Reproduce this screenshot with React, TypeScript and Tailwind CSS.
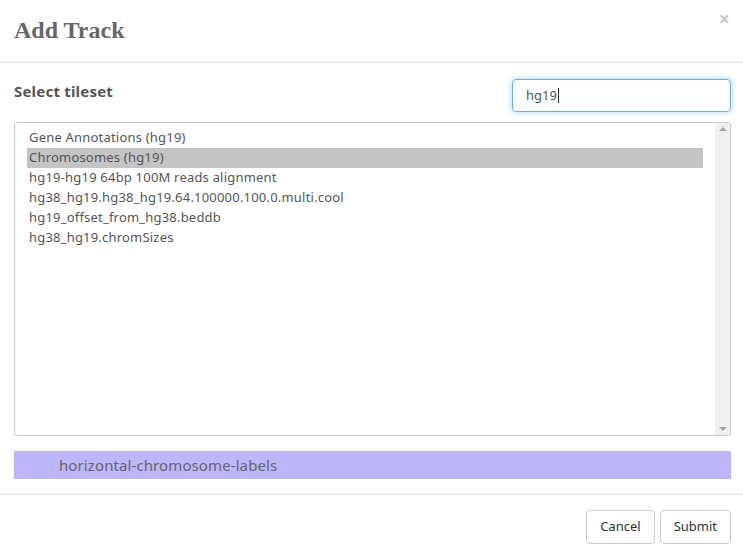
import React from "react";

const items = [
  "Gene Annotations (hg19)",
  "Chromosomes (hg19)",
  "hg19-hg19 64bp 100M reads alignment",
  "hg38_hg19.hg38_hg19.64.100000.100.0.multi.cool",
  "hg19_offset_from_hg38.beddb",
  "hg38_hg19.chromSizes",
];

export default function App() {
  const sans = { fontFamily: '"Noto Sans", sans-serif' };
  return (
    <div className="w-[743px] h-[557px] bg-white overflow-hidden" style={sans}>
      <div className="flex items-start justify-between h-[63px] border-b border-[#e5e5e5] pl-[14px] pr-[13px]">
        <h4
          className="mt-[15px] text-[24px] font-bold text-[#666] leading-[30px]"
          style={{ fontFamily: '"Liberation Serif", serif' }}
        >
          Add Track
        </h4>
        <span className="mt-[7px] text-[20px] font-bold text-[#c8c8c8] leading-[24px]">×</span>
      </div>
      <div className="pl-[14px] pr-[12px] pt-[16px] pb-[15px] border-b border-[#e5e5e5]">
        <div className="flex items-center justify-between h-[33px]">
          <span className="text-[15px] font-bold text-[#555] mt-[-9px] tracking-[0.2px]">Select tileset</span>
          <div className="w-[219px] h-[33px] rounded-[4px] border border-[#66afe9] shadow-[0_0_6px_rgba(102,175,233,0.6)] flex items-center pl-[13px] text-[13px] text-[#555]">
            hg19<span className="w-px h-[15px] bg-[#333] ml-px" />
          </div>
        </div>
        <div className="mt-[10px] h-[314px] border border-[#c8c8c8] rounded-[3px] flex">
          <div className="flex-1 pt-[5px] pl-[12px] pr-[12px]">
            {items.map((t, i) => (
              <div
                key={t}
                className={`h-[20px] leading-[19px] text-[13px] tracking-[0.2px] text-[#555] pl-[2px] ${i === 1 ? "bg-[#c4c4c4] text-[#333]" : ""}`}
              >
                {t}
              </div>
            ))}
          </div>
          <div className="w-[15px] bg-[#f0f0f0] flex flex-col justify-between items-center py-[4px]">
            <div className="w-0 h-0 border-l-[4px] border-r-[4px] border-b-[4px] border-l-transparent border-r-transparent border-b-[#a3a3a3]" />
            <div className="w-0 h-0 border-l-[4px] border-r-[4px] border-t-[4px] border-l-transparent border-r-transparent border-t-[#a3a3a3]" />
          </div>
        </div>
        <div className="mt-[15px] h-[28px] bg-[#bdb6fb] flex items-center pl-[45px] text-[15px] tracking-[0.1px] text-[#666]">
          horizontal-chromosome-labels
        </div>
      </div>
      <div className="flex justify-end gap-[5px] pr-[12px] pt-[15px]">
        <button className="h-[34px] px-[13px] border border-[#ccc] rounded-[4px] text-[13px] text-[#333] bg-white">Cancel</button>
        <button className="h-[34px] px-[13px] border border-[#ccc] rounded-[4px] text-[13px] text-[#333] bg-white">Submit</button>
      </div>
    </div>
  );
}
